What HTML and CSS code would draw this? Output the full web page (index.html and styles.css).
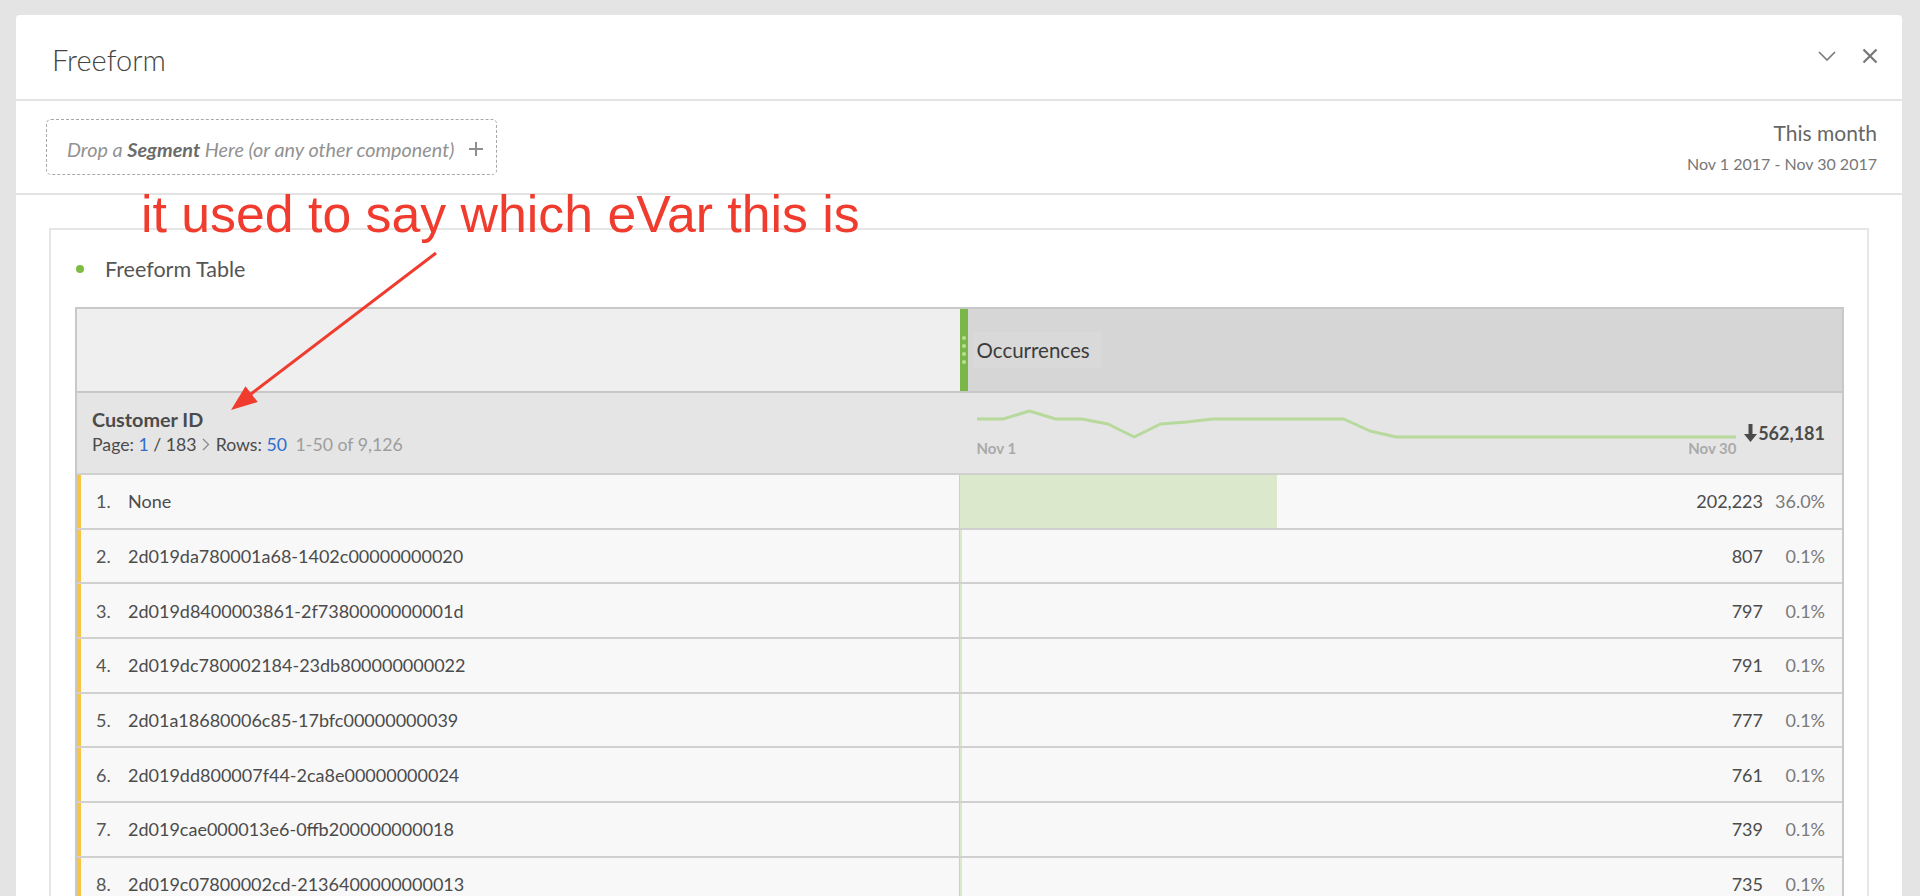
FILE: index.html
```html
<!DOCTYPE html>
<html lang="en">
<head>
    <meta charset="UTF-8">
    <title>Freeform</title>
    <link rel="stylesheet" href="styles.css">
</head>
<body>
    <div class="panel">
        <div class="panel-head">
            <h1>Freeform</h1>
            <div class="head-icons">
                <svg width="18" height="10" viewBox="0 0 18 10"><path d="M1 1l8 8 8-8" fill="none" stroke="#777" stroke-width="1.6"/></svg>
                <svg width="16" height="16" viewBox="0 0 16 16"><path d="M1.5 1.5l13 13M14.5 1.5l-13 13" stroke="#777" stroke-width="2.2"/></svg>
            </div>
        </div>

        <div class="toolbar">
            <div class="dropzone">
                <span>Drop a <b>Segment</b> Here (or any other component)</span>
                <svg width="16" height="16" viewBox="0 0 16 16"><path d="M8 1v14M1 8h14" stroke="#8f8f8f" stroke-width="2"/></svg>
            </div>
            <div class="daterange">
                <div class="range-name">This month</div>
                <div class="range-dates">Nov 1 2017 - Nov 30 2017</div>
            </div>
        </div>

        <div class="content">
            <div class="viz">
                <div class="viz-title"><span class="dot"></span>Freeform Table</div>

                <div class="table">
                    <div class="row row-metric">
                        <div class="cell"></div>
                        <div class="cell metric">
                            <span class="handle"><i></i><i></i><i></i><i></i></span>
                            <span class="metric-name">Occurrences</span>
                        </div>
                    </div>

                    <div class="row row-dim">
                        <div class="cell dim">
                            <div class="dim-name">Customer ID</div>
                            <div class="pager">Page: <span class="link">1</span> / 183
                                <svg width="8" height="13" viewBox="0 0 8 13"><path d="M1 1l5.5 5.5L1 12" fill="none" stroke="#8a8a8a" stroke-width="1.3"/></svg>
                                Rows: <span class="link">50</span> <span class="muted">1-50 of 9,126</span></div>
                        </div>
                        <div class="cell summary">
                            <div class="spark">
                                <svg width="760" height="34" viewBox="0 0 760 34">
                                    <polyline points="0,14 26.2,14 52.4,6 78.6,14 104.8,14 131,19 157.2,32 183.4,19 209.6,17 235.8,14 366.8,14 393,26 419.2,32 759,32" fill="none" stroke="#b8d99c" stroke-width="3" stroke-linejoin="round"/>
                                </svg>
                                <div class="spark-labels"><span>Nov 1</span><span>Nov 30</span></div>
                            </div>
                            <div class="total">
                                <svg width="13" height="18" viewBox="0 0 13 18"><path d="M4.5 0h4v10h4.5L6.5 18 0 10h4.5z" fill="#4b4b4b"/></svg>562,181
                            </div>
                        </div>
                    </div>

                    <div class="row row-data">
                        <div class="cell item"><span class="rank">1.</span>None</div>
                        <div class="cell value"><span class="bar" style="width: 36%"></span><span class="num">202,223</span><span class="pct">36.0%</span></div>
                    </div>
                    <div class="row row-data">
                        <div class="cell item"><span class="rank">2.</span>2d019da780001a68-1402c00000000020</div>
                        <div class="cell value"><span class="bar" style="width: 0.1%"></span><span class="num">807</span><span class="pct">0.1%</span></div>
                    </div>
                    <div class="row row-data">
                        <div class="cell item"><span class="rank">3.</span>2d019d8400003861-2f7380000000001d</div>
                        <div class="cell value"><span class="bar" style="width: 0.1%"></span><span class="num">797</span><span class="pct">0.1%</span></div>
                    </div>
                    <div class="row row-data">
                        <div class="cell item"><span class="rank">4.</span>2d019dc780002184-23db800000000022</div>
                        <div class="cell value"><span class="bar" style="width: 0.1%"></span><span class="num">791</span><span class="pct">0.1%</span></div>
                    </div>
                    <div class="row row-data">
                        <div class="cell item"><span class="rank">5.</span>2d01a18680006c85-17bfc00000000039</div>
                        <div class="cell value"><span class="bar" style="width: 0.1%"></span><span class="num">777</span><span class="pct">0.1%</span></div>
                    </div>
                    <div class="row row-data">
                        <div class="cell item"><span class="rank">6.</span>2d019dd800007f44-2ca8e00000000024</div>
                        <div class="cell value"><span class="bar" style="width: 0.1%"></span><span class="num">761</span><span class="pct">0.1%</span></div>
                    </div>
                    <div class="row row-data">
                        <div class="cell item"><span class="rank">7.</span>2d019cae000013e6-0ffb200000000018</div>
                        <div class="cell value"><span class="bar" style="width: 0.1%"></span><span class="num">739</span><span class="pct">0.1%</span></div>
                    </div>
                    <div class="row row-data">
                        <div class="cell item"><span class="rank">8.</span>2d019c07800002cd-2136400000000013</div>
                        <div class="cell value"><span class="bar" style="width: 0.1%"></span><span class="num">735</span><span class="pct">0.1%</span></div>
                    </div>
                </div>
            </div>
        </div>
    </div>

    <!-- screenshot annotation -->
    <div class="note">it used to say which eVar this is</div>
    <svg class="note-arrow" width="230" height="175" viewBox="0 0 230 175">
        <line x1="216" y1="8" x2="31" y2="149" stroke="#f03c2e" stroke-width="3"/>
        <polygon points="11,165 37.7,157.1 25.5,141.3" fill="#f03c2e"/>
    </svg>
</body>
</html>
```

FILE: styles.css
```css
* {
    box-sizing: border-box;
}
html, body {
    margin: 0;
    height: 896px;
    overflow: hidden;
}
body {
    position: relative;
    background-color: #e4e4e4;
    padding: 15px 18px 0 16px;
    font-family: Lato, "Open Sans", sans-serif;
    color: #4b4b4b;
}
.panel {
    height: 100%;
    background-color: #fff;
    border-radius: 4px 4px 0 0;
}
.panel-head {
    height: 86px;
    display: flex;
    align-items: center;
    justify-content: space-between;
    padding: 4px 24px 0 36px;
    border-bottom: 2px solid #e3e3e3;
}
.panel-head h1 {
    margin: 0;
    font-size: 29px;
    font-weight: 300;
    color: #444;
}
.head-icons {
    display: flex;
    align-items: center;
    gap: 26px;
    margin-top: -6px;
}
.toolbar {
    height: 94px;
    display: flex;
    justify-content: space-between;
    align-items: flex-start;
    padding: 18px 25px 0 30px;
    border-bottom: 2px solid #e3e3e3;
}
.dropzone {
    width: 451px;
    height: 56px;
    display: flex;
    align-items: center;
    justify-content: space-between;
    padding: 3px 12px 0 20px;
    border: 1px dashed #a8a8a8;
    border-radius: 5px;
    font-size: 19.8px;
    font-style: italic;
    color: #929292;
}
.dropzone b {
    color: #6b6b6b;
}
.daterange {
    text-align: right;
}
.range-name {
    margin-top: 3px;
    line-height: 22px;
    font-size: 21px;
    color: #666;
}
.range-dates {
    margin-top: 9px;
    line-height: 22px;
    font-size: 16px;
    color: #777;
}
.content {
    padding: 33px 33px 0 33px;
}
.viz {
    border: 2px solid #e6e6e6;
    border-bottom: none;
    padding: 0 23px 0 24px;
}
.viz-title {
    height: 77px;
    display: flex;
    align-items: center;
    padding-left: 1px;
    font-size: 21.5px;
    color: #555;
}
.dot {
    width: 8px;
    height: 8px;
    margin-right: 21px;
    border-radius: 50%;
    background-color: #7cbd42;
}
.table {
    border: 2px solid #c8c8c8;
    border-bottom: none;
}
.row {
    display: grid;
    grid-template-columns: 1fr 1fr;
}
.row-metric {
    height: 82px;
}
.row-metric .cell {
    background-color: #efefef;
}
.row-metric .metric {
    display: flex;
    align-items: center;
    background-color: #d6d6d6;
}
.handle {
    align-self: stretch;
    width: 8px;
    display: flex;
    flex-direction: column;
    align-items: center;
    justify-content: center;
    gap: 4px;
    background-color: #7ab648;
}
.handle i {
    width: 4px;
    height: 4px;
    border-radius: 50%;
    background-color: #b9df95;
}
.metric-name {
    margin-left: 5px;
    padding: 6px 12px 6px 4px;
    background-color: #d9d9d9;
    font-size: 20.5px;
    color: #3c3c3c;
}
.row-dim {
    height: 82px;
    border-top: 2px solid #c8c8c8;
    background-color: #e5e5e5;
}
.dim {
    padding: 13px 0 0 15px;
}
.dim-name {
    line-height: 26px;
    font-size: 19.8px;
    font-weight: 700;
}
.pager {
    line-height: 26px;
    font-size: 17.7px;
}
.pager svg {
    margin: 0 1px;
}
.link {
    color: #2d6fcf;
}
.muted {
    margin-left: 4px;
    color: #9d9d9d;
}
.summary {
    display: flex;
    padding: 12px 17px 0 17px;
}
.spark svg {
    display: block;
}
.spark-labels {
    display: flex;
    justify-content: space-between;
    line-height: 18px;
    font-size: 15px;
    font-weight: 700;
    color: #aaa;
}
.total {
    margin-left: auto;
    margin-top: 17px;
    line-height: 22px;
    font-size: 18px;
    font-weight: 700;
    color: #4b4b4b;
}
.total svg {
    margin-right: 1px;
    vertical-align: -2px;
}
.row-data {
    height: 54.7px;
    border-top: 2px solid #d0d0d0;
    background-color: #f8f8f8;
    font-size: 18px;
}
.item {
    display: flex;
    align-items: center;
    padding-left: 15px;
    border-left: 4px solid #f6c544;
    border-right: 1px solid #cdcdcd;
    color: #4b4b4b;
}
.rank {
    width: 32px;
    color: #555;
}
.value {
    position: relative;
    display: flex;
    align-items: center;
    justify-content: flex-end;
    padding-right: 17px;
}
.bar {
    position: absolute;
    left: 0;
    top: 0;
    bottom: 0;
    min-width: 2px;
    background-color: #dbe8cb;
}
.num, .pct {
    position: relative;
}
.pct {
    width: 62px;
    text-align: right;
    color: #7a7a7a;
}
.note {
    position: absolute;
    left: 141px;
    top: 189px;
    font-family: "Liberation Sans", Arial, sans-serif;
    font-size: 51.8px;
    line-height: 51px;
    color: #f03c2e;
    white-space: nowrap;
}
.note-arrow {
    position: absolute;
    left: 220px;
    top: 245px;
}
```
